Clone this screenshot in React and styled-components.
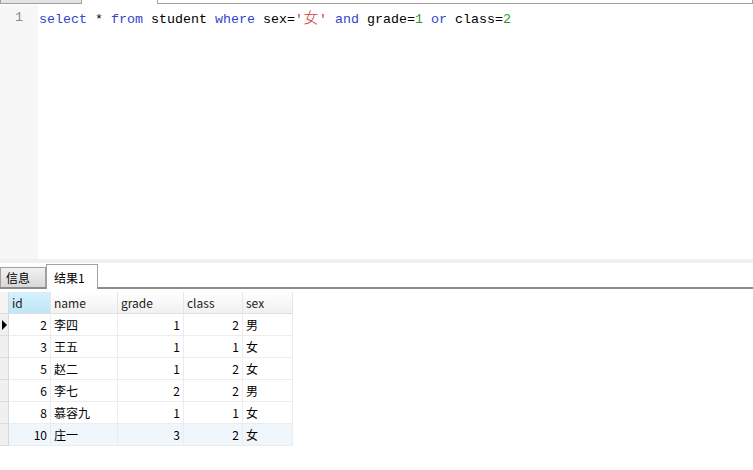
import React from "react";
import styled, { createGlobalStyle } from "styled-components";

const GlobalStyle = createGlobalStyle`
  html, body { margin: 0; padding: 0; background: #fff; }
  body { font-family: "Noto Sans CJK SC", "Liberation Sans", sans-serif; }
`;

const Page = styled.div`
  width: 753px;
  height: 470px;
  display: flex;
  flex-direction: column;
  background: #fff;
  overflow: hidden;
`;

const TopStrip = styled.div`
  height: 5px;
  display: flex;
  flex-shrink: 0;
`;

const TopTab = styled.div`
  height: 4px;
  box-sizing: border-box;
  border: 1px solid #a0a0a0;
  border-top: none;
  background: ${(p) => (p.$active ? "#fff" : "#e3e3e3")};
  width: ${(p) => p.$width}px;
  margin-left: ${(p) => p.$offset || 0}px;
`;

const Editor = styled.div`
  height: 254px;
  display: flex;
  flex-shrink: 0;
`;

const Gutter = styled.div`
  width: 38px;
  background: #f7f7f7;
  box-sizing: border-box;
  padding-top: 4px;
  text-align: right;
  padding-right: 15px;
  font-family: "Liberation Mono", monospace;
  font-size: 13.33px;
  line-height: 18px;
  color: #8a8a8a;
`;

const Code = styled.div`
  flex: 1;
  padding-top: 3px;
  padding-left: 1px;
  font-family: "Liberation Mono", "Noto Sans CJK SC", monospace;
  font-size: 13.33px;
  line-height: 18px;
  color: #000;
  white-space: pre;
`;

const Tok = styled.span`
  color: ${(p) => p.$c};
`;

const Han = styled.span`
  display: inline-block;
  width: 16px;
  font-family: "Noto Sans CJK SC", sans-serif;
  font-size: 15px;
  font-weight: 300;
  color: #d03a3a;
  text-align: center;
`;

const Divider = styled.div`
  height: 4px;
  background: #f0f0f0;
  flex-shrink: 0;
`;

const TabBar = styled.div`
  height: 26px;
  display: flex;
  align-items: flex-end;
  border-bottom: 2px solid #8c8c8c;
  box-sizing: border-box;
  flex-shrink: 0;
  font-size: 12px;
`;

const Tab = styled.div`
  box-sizing: border-box;
  height: ${(p) => (p.$active ? 25 : 20)}px;
  width: ${(p) => p.$width}px;
  display: flex;
  align-items: center;
  padding-left: ${(p) => (p.$active ? 7 : 5)}px;
  border: 1px solid #a0a0a0;
  border-bottom: none;
  color: #000;
  background: ${(p) =>
    p.$active ? "#fff" : "linear-gradient(#f2f2f2, #d8d8d8)"};
  margin-bottom: ${(p) => (p.$active ? -2 : 0)}px;
`;

const Grid = styled.div`
  margin-top: 3px;
  display: grid;
  grid-template-columns: 9px 42px 67px 66px 59px 50px;
  width: 293px;
  font-size: 12px;
  color: #000;
`;

const HeadCell = styled.div`
  height: 22px;
  box-sizing: border-box;
  padding-left: 3px;
  display: flex;
  align-items: center;
  color: #222;
  border-right: 1px solid #e6e6e6;
  border-bottom: 1px solid #e0e0e0;
  background: ${(p) =>
    p.$hot
      ? "linear-gradient(#d6f1fc, #bfe6f7)"
      : "linear-gradient(#ffffff, #f1f1f1)"};
`;

const Indicator = styled.div`
  height: 22px;
  box-sizing: border-box;
  background: ${(p) => (p.$head ? "#f4f4f4" : "#f0f0f0")};
  border-right: 1px solid #d8d8d8;
  border-bottom: 1px solid #dcdcdc;
  display: flex;
  align-items: center;
  padding-left: 2px;
`;

const Arrow = styled.div`
  width: 0;
  height: 0;
  border-top: 5px solid transparent;
  border-bottom: 5px solid transparent;
  border-left: 5px solid #000;
`;

const Cell = styled.div`
  height: 22px;
  box-sizing: border-box;
  display: flex;
  align-items: center;
  justify-content: ${(p) => (p.$num ? "flex-end" : "flex-start")};
  padding: 0 3px;
  border-right: 1px solid #ececec;
  border-bottom: 1px solid #ececec;
  background: ${(p) => (p.$tint ? "#eff6fc" : "#fff")};
`;

const rows = [
  [2, "李四", 1, 2, "男"],
  [3, "王五", 1, 1, "女"],
  [5, "赵二", 1, 2, "女"],
  [6, "李七", 2, 2, "男"],
  [8, "慕容九", 1, 1, "女"],
  [10, "庄一", 3, 2, "女"],
];

const headers = ["id", "name", "grade", "class", "sex"];

export default function App() {
  return (
    <Page>
      <GlobalStyle />
      <TopStrip>
        <TopTab $width={82} />
        <TopTab $active $width={596} $offset={75} />
      </TopStrip>
      <Editor>
        <Gutter>1</Gutter>
        <Code>
          <Tok $c="#3344cc">select</Tok> * <Tok $c="#3344cc">from</Tok> student{" "}
          <Tok $c="#3344cc">where</Tok> sex=<Tok $c="#d03a3a">'</Tok>
          <Han>女</Han>
          <Tok $c="#d03a3a">'</Tok> <Tok $c="#3344cc">and</Tok> grade=
          <Tok $c="#2a9a2a">1</Tok> <Tok $c="#3344cc">or</Tok> class=
          <Tok $c="#2a9a2a">2</Tok>
        </Code>
      </Editor>
      <Divider />
      <TabBar>
        <Tab $width={46}>信息</Tab>
        <Tab $active $width={52}>结果1</Tab>
      </TabBar>
      <Grid>
        <Indicator $head />
        {headers.map((h, i) => (
          <HeadCell key={h} $hot={i === 0}>
            {h}
          </HeadCell>
        ))}
        {rows.map((r, ri) => {
          const tint = ri === rows.length - 1;
          return (
            <React.Fragment key={ri}>
              <Indicator>{ri === 0 && <Arrow />}</Indicator>
              <Cell $num $tint={tint}>{r[0]}</Cell>
              <Cell $tint={tint}>{r[1]}</Cell>
              <Cell $num $tint={tint}>{r[2]}</Cell>
              <Cell $num $tint={tint}>{r[3]}</Cell>
              <Cell $tint={tint}>{r[4]}</Cell>
            </React.Fragment>
          );
        })}
      </Grid>
    </Page>
  );
}
